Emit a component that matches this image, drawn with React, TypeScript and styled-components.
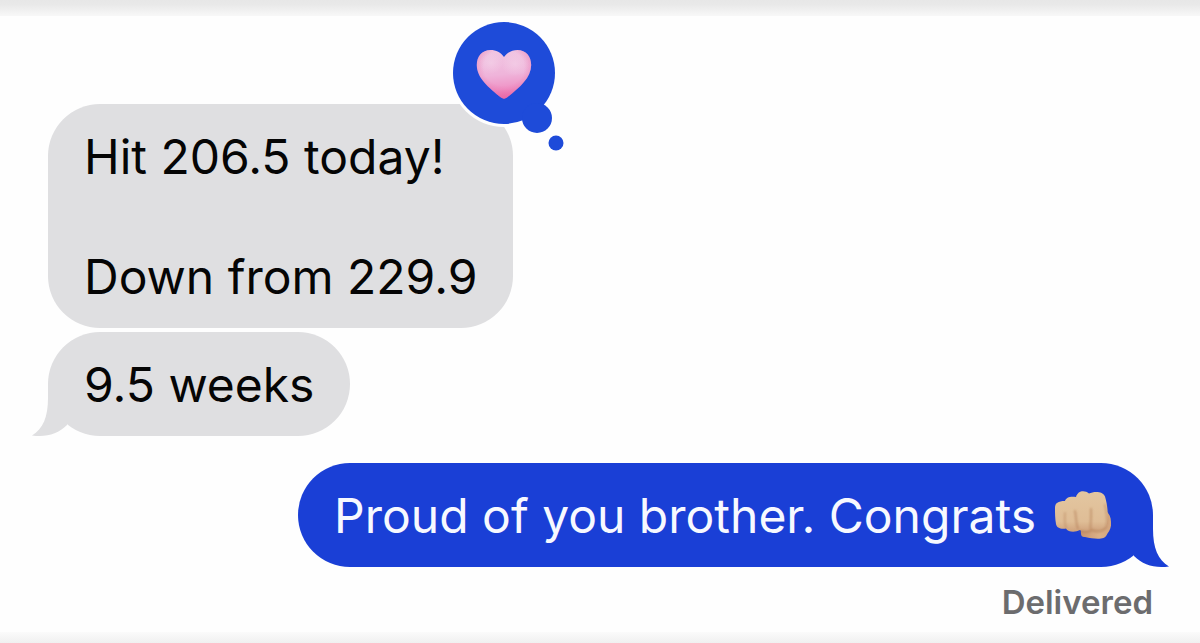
import React from "react";
import styled, { createGlobalStyle } from "styled-components";

const GlobalStyle = createGlobalStyle`
  *, *::before, *::after { box-sizing: border-box; }
  body {
    margin: 0;
    background: #fefefe;
    font-family: Inter, "Liberation Sans", sans-serif;
    color: #050505;
  }
`;

const GREY = "#dfdfe1";
const BLUE = "#1a3fd6";
const REACTION_BLUE = "#1e4bd9";

type Side = "received" | "sent";

const Screen = styled.div`
  min-height: 100vh;
  display: flex;
  flex-direction: column;
`;

const TopEdge = styled.div`
  height: 16px;
  background: linear-gradient(#e7e7e7 0, #e9e9e9 30%, #f8f8f8 100%);
`;

const BottomEdge = styled.div`
  height: 11px;
  margin-top: auto;
  background: linear-gradient(#fbfbfb, #f0f0f0);
`;

const Thread = styled.ol`
  list-style: none;
  margin: 0;
  padding: 88px 47px 0 48px;
  display: flex;
  flex-direction: column;
  gap: 4px;
`;

const Message = styled.li<{ $side: Side }>`
  display: flex;
  flex-direction: column;
  align-items: ${(p) => (p.$side === "sent" ? "flex-end" : "flex-start")};
  margin-top: ${(p) => (p.$side === "sent" ? "23px" : "0")};
`;

const Bubble = styled.div<{ $side: Side }>`
  position: relative;
  padding: 23px 36px 21px;
  border-radius: 52px;
  background: ${(p) => (p.$side === "sent" ? BLUE : GREY)};
  color: ${(p) => (p.$side === "sent" ? "#f7f9ff" : "#050505")};
  font-size: 48px;
  line-height: 60px;
`;

const Text = styled.p`
  margin: 0;
  white-space: pre-line;
`;

const EmojiLine = styled.div`
  display: flex;
  align-items: center;
  gap: 18px;
  padding-right: 5px;
`;

const TailShape = styled.svg<{ $side: Side }>`
  position: absolute;
  bottom: 0;
  ${(p) => (p.$side === "sent" ? "right: -16px; transform: scaleX(-1);" : "left: -16px;")}
  fill: ${(p) => (p.$side === "sent" ? BLUE : GREY)};
`;

const Reaction = styled.svg`
  position: absolute;
  top: -85px;
  right: -55px;
`;

const Status = styled.p`
  margin: 15px 0 0;
  font-size: 33px;
  line-height: 40px;
  font-weight: 600;
  color: #6c6c6e;
`;

const Tail = ({ side }: { side: Side }) => (
  <TailShape $side={side} width="36" height="52" viewBox="0 0 36 52" aria-hidden="true">
    <path d="M16 0V14C16 33 11 45 0 51.4C14 53.5 26 50 35 41V0Z" />
  </TailShape>
);

const HEART =
  "M56 38C53 33.500 48 31 42.500 31C34 31 28.800 37.500 28.800 46C28.800 59 41 69 53 78.500C55 80 57 80 59 78.500C71 69 83.200 59 83.200 46C83.200 37.500 78 31 69.500 31C64 31 59 33.500 56 38Z";

const HeartReaction = () => (
  <Reaction width="120" height="136" viewBox="0 0 120 136" role="img" aria-label="Reacted with a heart">
    <defs>
      <linearGradient id="heartFill" x1="0.45" y1="0" x2="0.55" y2="1">
        <stop offset="0" stopColor="#f1c6e2" />
        <stop offset="0.5" stopColor="#efb4da" />
        <stop offset="0.8" stopColor="#ef92c5" />
        <stop offset="1" stopColor="#ee66a8" />
      </linearGradient>
      <radialGradient id="heartGlow">
        <stop offset="0" stopColor="#f5d8ec" stopOpacity="0.5" />
        <stop offset="1" stopColor="#f5d8ec" stopOpacity="0" />
      </radialGradient>
      <radialGradient id="heartShade" cx="0.5" cy="0.36" r="0.62">
        <stop offset="0.6" stopColor="#e96aa6" stopOpacity="0" />
        <stop offset="1" stopColor="#e96aa6" stopOpacity="0.6" />
      </radialGradient>
    </defs>
    <circle cx="56" cy="54" r="54" fill="#fefefe" />
    <g fill={REACTION_BLUE}>
      <circle cx="56" cy="54" r="51" />
      <circle cx="89" cy="99" r="15" />
      <circle cx="108" cy="124" r="7.5" />
    </g>
    <path d={HEART} fill="url(#heartFill)" />
    <path d={HEART} fill="url(#heartShade)" />
    <ellipse cx="43" cy="44" rx="12" ry="11" fill="url(#heartGlow)" />
    <ellipse cx="67" cy="45" rx="14" ry="12" fill="url(#heartGlow)" />
  </Reaction>
);

const Fist = () => (
  <svg width="58" height="50" viewBox="0 0 58 50" role="img" aria-label="Fist bump">
    <defs>
      <linearGradient id="skin" x1="0" y1="0" x2="0" y2="1">
        <stop offset="0" stopColor="#e3c6a0" />
        <stop offset="0.75" stopColor="#dfbd96" />
        <stop offset="1" stopColor="#cfa27c" />
      </linearGradient>
      <linearGradient id="thumb" x1="0" y1="0" x2="1" y2="0">
        <stop offset="0" stopColor="#c8946f" />
        <stop offset="0.6" stopColor="#dbb188" />
        <stop offset="1" stopColor="#d3a57e" />
      </linearGradient>
      <filter id="soften" x="-20%" y="-20%" width="140%" height="140%">
        <feGaussianBlur stdDeviation="0.8" />
      </filter>
    </defs>
    <path
      d="M27 35V42C27 45 28 46 31 46C37 47.500 43 48 47 47.500C51 47 52 45.500 53.500 42.500C56 39 57.500 36 57 31C57 26 55 22 51 19L40 35Z"
      fill="url(#thumb)"
    />
    <path
      d="M1 17C1 12 4 10 11 10C12 6 17 5 22 6C24 -1 31 -1 35 2.500C40 0 49 0 51 5.500C53 12 54 20 53.500 27C53.300 34 52 39 46 39.500C43 40 40 39.500 37.500 38C34 41 29 41 25.500 39C22 41.500 14 41.500 12 37.500C7 38.500 2.500 37 2 33C1 28 1 22 1 17Z"
      fill="url(#skin)"
    />
    <g fill="none" stroke="#b5825b" strokeWidth="2" strokeLinecap="round" filter="url(#soften)">
      <path d="M11 22C10.500 27 10.500 32 12 36.500" strokeOpacity="0.45" />
      <path d="M21 20C22.500 26 21.500 32 24 37.500" strokeOpacity="0.6" />
      <path d="M37 18C37.500 25 36.500 32 36.500 37.500" strokeOpacity="0.6" />
      <path d="M27 40C32 41.500 36 41 38 39C42 41 48 41.500 51 37.500" strokeOpacity="0.65" />
      <path d="M51 14C53.500 24 53.500 31 52 37" strokeOpacity="0.5" />
    </g>
  </svg>
);

export default function App() {
  return (
    <Screen>
      <GlobalStyle />
      <TopEdge />
      <main>
        <Thread>
          <Message $side="received">
            <Bubble $side="received">
              <Text>{"Hit 206.5 today!\n\nDown from 229.9"}</Text>
              <HeartReaction />
            </Bubble>
          </Message>
          <Message $side="received">
            <Bubble $side="received">
              <Tail side="received" />
              <Text>9.5 weeks</Text>
            </Bubble>
          </Message>
          <Message $side="sent">
            <Bubble $side="sent">
              <Tail side="sent" />
              <EmojiLine>
                <Text>Proud of you brother. Congrats</Text>
                <Fist />
              </EmojiLine>
            </Bubble>
            <Status>Delivered</Status>
          </Message>
        </Thread>
      </main>
      <BottomEdge />
    </Screen>
  );
}
